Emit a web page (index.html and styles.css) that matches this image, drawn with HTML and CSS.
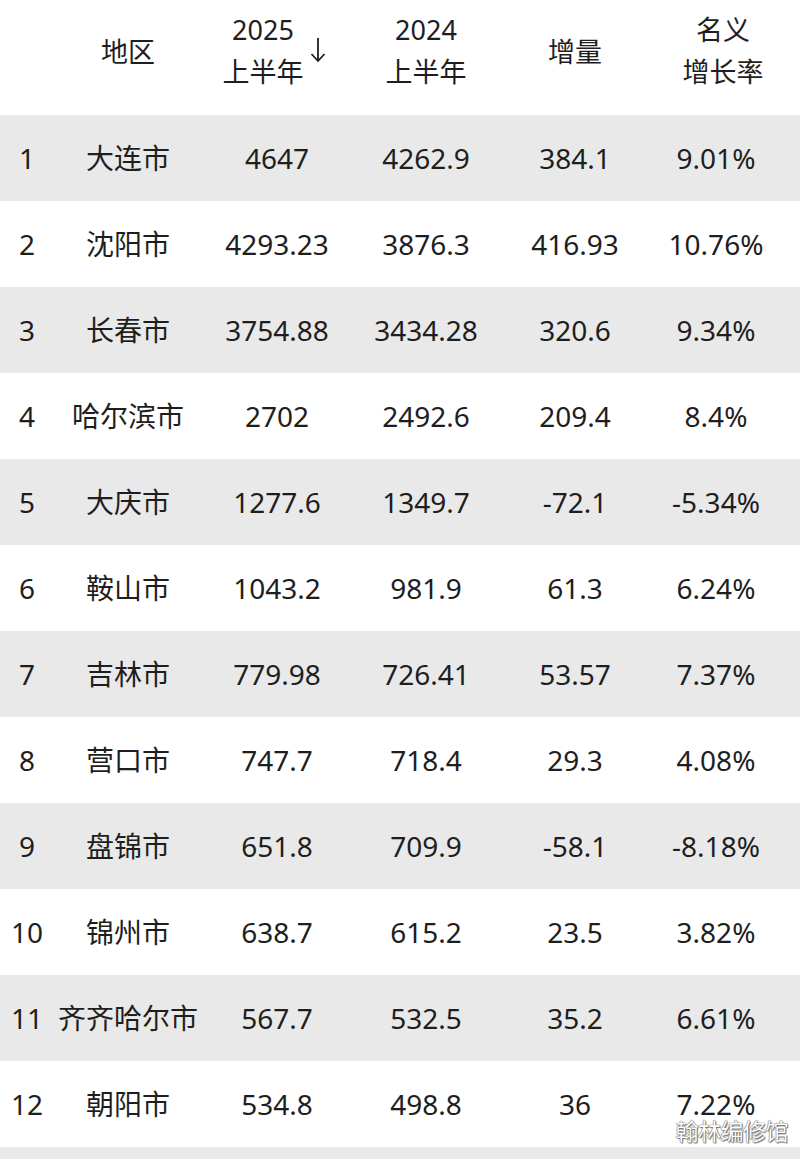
FILE: index.html
```html
<!DOCTYPE html>
<html lang="zh">
<head>
<meta charset="utf-8">
<link rel="stylesheet" href="styles.css">
</head>
<body>
<div class="page">
  <div class="table">
    <div class="row head">
      <div class="cell"></div>
      <div class="cell"><span>地区</span></div>
      <div class="cell sort"><span class="two">2025<br>上半年</span><svg class="arrow" width="16" height="26" viewBox="0 0 16 26"><path d="M8 1 V24 M1.5 17 L8 24 L14.5 17" fill="none" stroke="#1e1e1e" stroke-width="1.8"/></svg></div>
      <div class="cell"><span class="two">2024<br>上半年</span></div>
      <div class="cell"><span>增量</span></div>
      <div class="cell last"><span class="two">名义<br>增长率</span></div>
    </div>
    <div class="row alt"><div class="cell">1</div><div class="cell">大连市</div><div class="cell">4647</div><div class="cell">4262.9</div><div class="cell">384.1</div><div class="cell">9.01%</div></div>
    <div class="row"><div class="cell">2</div><div class="cell">沈阳市</div><div class="cell">4293.23</div><div class="cell">3876.3</div><div class="cell">416.93</div><div class="cell">10.76%</div></div>
    <div class="row alt"><div class="cell">3</div><div class="cell">长春市</div><div class="cell">3754.88</div><div class="cell">3434.28</div><div class="cell">320.6</div><div class="cell">9.34%</div></div>
    <div class="row"><div class="cell">4</div><div class="cell">哈尔滨市</div><div class="cell">2702</div><div class="cell">2492.6</div><div class="cell">209.4</div><div class="cell">8.4%</div></div>
    <div class="row alt"><div class="cell">5</div><div class="cell">大庆市</div><div class="cell">1277.6</div><div class="cell">1349.7</div><div class="cell">-72.1</div><div class="cell">-5.34%</div></div>
    <div class="row"><div class="cell">6</div><div class="cell">鞍山市</div><div class="cell">1043.2</div><div class="cell">981.9</div><div class="cell">61.3</div><div class="cell">6.24%</div></div>
    <div class="row alt"><div class="cell">7</div><div class="cell">吉林市</div><div class="cell">779.98</div><div class="cell">726.41</div><div class="cell">53.57</div><div class="cell">7.37%</div></div>
    <div class="row"><div class="cell">8</div><div class="cell">营口市</div><div class="cell">747.7</div><div class="cell">718.4</div><div class="cell">29.3</div><div class="cell">4.08%</div></div>
    <div class="row alt"><div class="cell">9</div><div class="cell">盘锦市</div><div class="cell">651.8</div><div class="cell">709.9</div><div class="cell">-58.1</div><div class="cell">-8.18%</div></div>
    <div class="row"><div class="cell">10</div><div class="cell">锦州市</div><div class="cell">638.7</div><div class="cell">615.2</div><div class="cell">23.5</div><div class="cell">3.82%</div></div>
    <div class="row alt"><div class="cell">11</div><div class="cell">齐齐哈尔市</div><div class="cell">567.7</div><div class="cell">532.5</div><div class="cell">35.2</div><div class="cell">6.61%</div></div>
    <div class="row"><div class="cell">12</div><div class="cell">朝阳市</div><div class="cell">534.8</div><div class="cell">498.8</div><div class="cell">36</div><div class="cell">7.22%</div></div>
    <div class="row alt tail"></div>
  </div>
  <div class="watermark">翰林编修馆</div>
</div>
</body>
</html>
```
FILE: styles.css
```css
html, body {
  margin: 0;
  padding: 0;
  background: #ffffff;
}
.page {
  position: relative;
  width: 800px;
  height: 1159px;
  overflow: hidden;
  font-family: "Noto Sans", "Noto Sans CJK SC", sans-serif;
  color: #1e1e1e;
  font-size: 28px;
}
.table {
  display: flex;
  flex-direction: column;
}
.row {
  display: grid;
  grid-template-columns: 54px 148px 150px 148px 150px 132px 18px;
  height: 86px;
  align-items: center;
}
.row.alt {
  background: #e9e9e9;
}
.row.tail {
  height: 20px;
}
.cell {
  display: flex;
  justify-content: center;
  align-items: center;
  white-space: nowrap;
  line-height: 1;
}
.row.head {
  height: 115px;
  box-sizing: border-box;
  padding-bottom: 13px;
  background: #ffffff;
  font-size: 27px;
}
.head .two {
  display: block;
  text-align: center;
  line-height: 42px;
}
.head .sort {
  gap: 6px;
  padding-right: 6px;
}
.head .sort .arrow {
  display: block;
  margin-top: -2px;
}
.head .last {
  padding-left: 14px;
}
.watermark {
  position: absolute;
  right: 12px;
  bottom: 12px;
  font-family: "Noto Sans CJK SC", sans-serif;
  font-size: 23px;
  letter-spacing: -0.5px;
  color: #ffffff;
  text-shadow: 0 0 1px #555, 0 0 1px #555, 1px 1px 1px #777;
}
```
